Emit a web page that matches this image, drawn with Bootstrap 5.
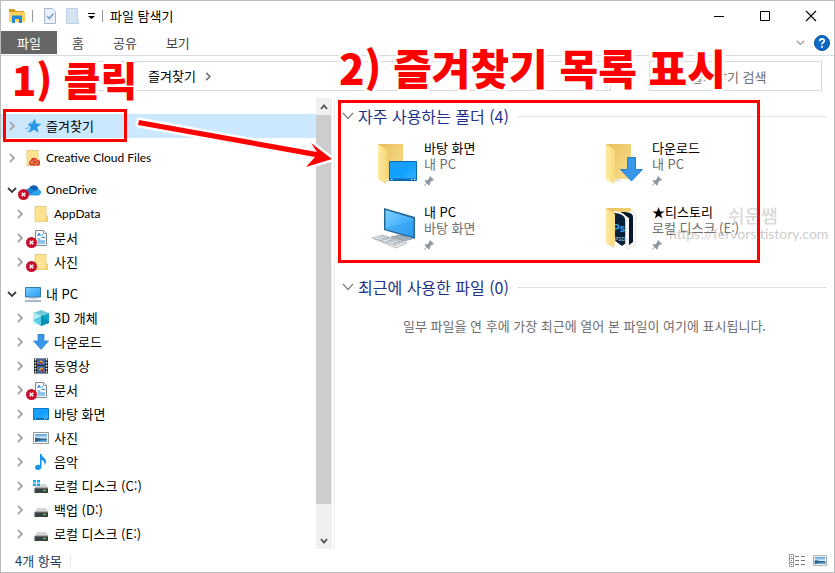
<!DOCTYPE html>
<html lang="ko">
<head>
<meta charset="utf-8">
<meta name="viewport" content="width=device-width, initial-scale=1">
<title>파일 탐색기</title>
<link href="https://cdn.jsdelivr.net/npm/bootstrap@5.3.0/dist/css/bootstrap.min.css" rel="stylesheet">
<style>
body{font-family:"Noto Sans CJK KR","Noto Sans",sans-serif;font-size:13px;line-height:16px;color:#000;background:#fff}
button{background:none;border:0;padding:0;color:inherit;display:inline-flex;align-items:center;justify-content:center}
svg{display:block;flex:none;overflow:visible}
.win{border:1px solid #bcbcbc}
.titlebar{height:30px}
.qat{padding-left:8px}
.sep{width:1px;height:12px;background:#999}
.qat .sep{margin:0 7px}
.cap-btn{width:46px;height:30px}
.ribbon{height:25px;border-bottom:1px solid #dadbdc;color:#444;gap:1px}
.file-tab{width:56px;height:23px;background:#666;color:#fff}
.ribbon-tab{height:23px;padding:0 14px}
.addr-row{padding:5px 12px 7px 16px}
.addr{height:30px;border:1px solid #d9d9d9;margin-right:38px;margin-left:58px;padding-left:64px}
.addr-end{width:4px;border-left:1px solid #e5e5e5}
.search{width:173px;height:30px;border:1px solid #d9d9d9;padding:0 8px 0 41px;outline:0;border-radius:0}
.search::placeholder{color:#6d6d6d;opacity:1}
.side{width:334px;border-right:1px solid #ececec}
.tree{padding-top:16px}
.tree ul{margin-bottom:8px}
.node{height:24px;padding-left:4px}
.node a{color:#000;text-decoration:none;gap:5px}
.node button{width:14px;height:24px;margin-right:6px}
.sub .node{padding-left:12px}
.latin{font-family:Lato,"Noto Sans CJK KR",sans-serif;font-size:12px}
.picked{background:#cce8ff}
.scroller{width:16px;background:#f0f0f0;margin-right:2px}
.scroller button{height:17px;width:16px}
.thumb{background:#cdcdcd;width:15px;margin-bottom:28px}
.pane{padding:8px 7px 0 7px}
.group-title{font-size:16px;line-height:20px;color:#1e3287;font-weight:400;margin:0}
.group-line{height:1px;background:#e2e2e2}
.tiles{display:grid;grid-template-columns:repeat(auto-fill,228px);row-gap:16px;padding:14px 0 25px 30px;margin-right:-7px}
.tile{gap:4px;color:#000;text-decoration:none;height:48px}
.muted{color:#6d6d6d}
.empty{color:#6d6d6d;padding-top:21px}
.status{height:23px;padding:0 7px 0 14px;color:#1e395b}
.red-frame{position:absolute;border:3px solid #f00;pointer-events:none}
.frame-a{left:3px;top:109px;width:124px;height:33px}
.frame-b{left:338px;top:100px;width:422px;height:163px}
.note{position:absolute;font-size:42px;line-height:48px;font-weight:900;color:#f00;white-space:nowrap;pointer-events:none;
text-shadow:3px 0 #fff,-3px 0 #fff,0 3px #fff,0 -3px #fff,2px 2px #fff,-2px 2px #fff,2px -2px #fff,-2px -2px #fff}
.note-a{left:12px;top:55px;font-size:40px}
.note-b{left:339px;top:43px}
.arrow{position:absolute;left:0;top:0;pointer-events:none}
.watermark{position:absolute;left:669px;top:206px;pointer-events:none;color:rgba(120,120,120,.4);font-family:Lato,"Noto Sans CJK KR",sans-serif;font-size:14px}
.watermark b{display:block;font-size:18px;line-height:20px;padding-left:59px;font-weight:500;color:rgba(120,120,120,.3)}
</style>
<script src="https://cdn.jsdelivr.net/npm/bootstrap@5.3.0/dist/js/bootstrap.bundle.min.js"></script>
</head>
<body>
<svg width="0" height="0" class="position-absolute" aria-hidden="true">
<defs>
<linearGradient id="gf" x1="0" x2="1"><stop offset="0" stop-color="#ffe9a2"/><stop offset="1" stop-color="#f9d978"/></linearGradient>
<linearGradient id="gb" x1="0" y1="0" x2="1" y2="1"><stop offset="0" stop-color="#e9be5c"/><stop offset="1" stop-color="#fae08f"/></linearGradient>
<linearGradient id="gs" x1="0" y1="0" x2="1" y2="1"><stop offset="0" stop-color="#7fd0ff"/><stop offset=".5" stop-color="#4db5fb"/><stop offset="1" stop-color="#2b9df0"/></linearGradient>
<linearGradient id="gd" x1="0" y1="0" x2="1" y2="1"><stop offset="0" stop-color="#1aa0f5"/><stop offset=".5" stop-color="#12a0ff"/><stop offset="1" stop-color="#3bb2ff"/></linearGradient>
<linearGradient id="gp" x1="0" y1="0" x2="0" y2="1"><stop offset="0" stop-color="#4b9be0"/><stop offset=".5" stop-color="#d5ecf7"/><stop offset=".65" stop-color="#2f5876"/><stop offset="1" stop-color="#4d8ec4"/></linearGradient>
<symbol id="right" viewBox="0 0 8 10"><path d="M2 1l4 4-4 4" fill="none" stroke="#a6a6a6" stroke-width="1.8"/></symbol>
<symbol id="down" viewBox="0 0 10 8"><path d="M1 2l4 4 4-4" fill="none" stroke="#404040" stroke-width="1.8"/></symbol>
<symbol id="thin" viewBox="0 0 12 8"><path d="M1 1l5 5.500 5-5.500" fill="none" stroke="#808080" stroke-width="1.200"/></symbol>
<symbol id="err" viewBox="0 0 12 12"><circle cx="6" cy="6" r="6" fill="#c50f2b"/><path d="M4 4l4 4M8 4l-4 4" stroke="#fff" stroke-width="1.500"/></symbol>
<symbol id="folder" viewBox="0 0 16 16"><path d="M2 .5h11v10l1.500-1v6H2z" fill="#ffe391" stroke="#eac566" stroke-width=".8"/><path d="M12.500 15.500v-4l2-1.800v5.800z" fill="#f3cc68"/></symbol>
<symbol id="doc" viewBox="0 0 16 16"><path d="M2.500.5h8l3 3v12h-11z" fill="#fff" stroke="#7c8790"/><path d="M10.500.5v3h3" fill="#e5e9ed" stroke="#7c8790" stroke-width=".8"/><path d="M4.500 6l1.500-3 1.500 3M5 5h2M8.500 5h1.500M8.500 7.500h3.500M4.500 9h3M4.500 11h7.500M4.500 13h7.500" fill="none" stroke="#2588d0"/></symbol>
<symbol id="desk" viewBox="0 0 16 16"><path d="M.5 2.500h15v11H.5z" fill="url(#gd)" stroke="#0878c9"/><path d="M1 12.500h14" stroke="#066cb8"/><path d="M2 12.500h1M11 12.500h1M13 12.500h1" stroke="#fff" stroke-width=".7"/></symbol>
<symbol id="dl" viewBox="0 0 16 16"><path d="M5 0h6v7h4.500L8 15.500.5 7H5z" fill="#3797e8" stroke="#2a80cd" stroke-width=".7"/></symbol>
<symbol id="photo" viewBox="0 0 16 12"><path d="M.5.500h15v11H.5z" fill="#fff" stroke="#999"/><path d="M2 2h12v8H2z" fill="url(#gp)"/><path d="M2 6c4-1 5 2 12 1v3H2z" fill="#28608a"/><path d="M3 9.500c4-1.500 7-1 11-2V10H3z" fill="#5da5d0"/></symbol>
<symbol id="disk" viewBox="0 0 16 16"><path d="M4 6h9l2 4H2z" fill="#d5d5d5"/><path d="M1.500 10h13.500v5H1.500z" fill="#3e4142"/><path d="M2 10h13" stroke="#888"/><path d="M10.500 12.500h2" stroke="#42ed54" stroke-width="1.600"/></symbol>
<symbol id="bigfolder" viewBox="0 0 48 48"><path d="M6 4h25v35H14z" fill="url(#gb)"/><path d="M6 4l9 6v27l-1 7L6 39z" fill="url(#gf)"/><path d="M15 42l8-2-8-1z" fill="#ddd"/></symbol>
<symbol id="pin" viewBox="0 0 10 10"><path d="M6 0l4 4-1 .7-1-.2L6 6.700 5.800 9 5 9.500 3 7.500.5 10 0 9.500 2.500 7 .5 5l.7-.7 2.300-.1L5.600 2 5.400.8z" fill="#8b969f"/></symbol>
</defs>
</svg>

<div class="win min-vh-100 d-flex flex-column position-relative">
<header>
 <div class="titlebar d-flex align-items-center">
  <div class="qat d-flex align-items-center flex-grow-1">
   <svg width="16" height="14" viewBox="0 0 16 14"><path d="M0 0h5l2 2h8v2H0z" fill="#d99c16"/><path d="M0 3h16v10H0z" fill="#ffd35e"/><path d="M3 6.500h10V14h-3V10H6v4H3z" fill="#2588d5"/></svg>
   <span class="sep"></span>
   <button class="ms-1" aria-label="속성"><svg width="12" height="16" viewBox="0 0 12 16"><path d="M.5.500h8l3 3v12H.5z" fill="#e8f1fb" stroke="#a7bad2"/><path d="M3 8l2.300 2.500L9.500 5.500" fill="none" stroke="#7d9bc4" stroke-width="1.500"/></svg></button>
   <button class="ms-2" aria-label="새 폴더"><svg width="16" height="16" viewBox="0 0 16 16"><path d="M2.500.5h11v11h1v4h-12z" fill="#d7e3f3" stroke="#c1d1e8"/></svg></button>
   <button class="ms-2" aria-label="빠른 실행 도구 모음 사용자 지정"><svg width="7" height="6" viewBox="0 0 7 6"><path d="M0 .5h7" stroke="#000"/><path d="M0 3h7L3.500 6z" fill="#000"/></svg></button>
   <span class="sep"></span>
   <span>파일 탐색기</span>
  </div>
  <button class="cap-btn" aria-label="최소화"><svg width="10" height="10"><path d="M0 5.500h10" stroke="#000"/></svg></button>
  <button class="cap-btn" aria-label="최대화"><svg width="10" height="10"><path d="M.5.500h9v9h-9z" fill="none" stroke="#000"/></svg></button>
  <button class="cap-btn" aria-label="닫기"><svg width="10" height="10"><path d="M0 0l10 10M10 0L0 10" stroke="#000" stroke-width="1.100"/></svg></button>
 </div>
 <nav class="ribbon d-flex align-items-start">
  <button class="file-tab">파일</button><button class="ribbon-tab">홈</button><button class="ribbon-tab">공유</button><button class="ribbon-tab">보기</button>
  <button class="ms-auto mt-2" aria-label="리본 확장"><svg width="9" height="8" viewBox="0 0 12 8"><path d="M1 1l5 5 5-5" fill="none" stroke="#999" stroke-width="1.500"/></svg></button>
  <button class="ms-2 me-1 mt-1" aria-label="도움말"><svg width="16" height="16" viewBox="0 0 16 16"><circle cx="8" cy="8" r="7.500" fill="#0b69c7" stroke="#07549f"/><path d="M5.700 6.200c0-3.200 4.800-3 4.600-.3C10.200 7.500 8 7.500 8 9.500" fill="none" stroke="#fff" stroke-width="1.700"/><circle cx="8" cy="11.800" r="1.100" fill="#fff"/></svg></button>
 </nav>
 <div class="addr-row d-flex align-items-center">
  <button aria-label="뒤로"><svg width="8" height="10" viewBox="0 0 8 10"><path d="M6 1L2 5l4 4" fill="none" stroke="#777" stroke-width="1.500"/></svg></button>
  <div class="addr d-flex align-items-center flex-grow-1"><span>즐겨찾기</span><svg class="ms-2" width="8" height="9"><use href="#right" style="filter:brightness(.7)"/></svg><span class="addr-end ms-auto align-self-stretch"></span></div>
  <input class="search" type="search" placeholder="즐겨찾기 검색" aria-label="즐겨찾기 검색">
 </div>
</header>

<div class="d-flex flex-grow-1">
 <aside class="side d-flex flex-shrink-0">
  <nav class="tree flex-grow-1" aria-label="탐색 창">
   <ul class="list-unstyled"><li class="node picked d-flex align-items-center"><button aria-label="펼치기"><svg width="8" height="10"><use href="#right"/></svg></button><a href="#" class="d-flex align-items-center"><svg width="16" height="16" viewBox="0 0 16 16"><path d="M9.500 1.500l1.400 4.500 4.800.1-4 3 1.300 5-4-2.800-4.500 2.800 1.700-5-3-3 4.300-.1z" fill="#2594e4" stroke="#2594e4" stroke-width=".8"/><path d="M5 4.500l3-.5M0 11l4-1.500M2 14l4-2.500" stroke="#5bb2ee"/></svg>즐겨찾기</a></li></ul>
   <ul class="list-unstyled"><li class="node d-flex align-items-center"><button aria-label="펼치기"><svg width="8" height="10"><use href="#right"/></svg></button><a href="#" class="latin d-flex align-items-center"><svg width="16" height="16" viewBox="0 0 16 16"><use href="#folder" width="16" height="16"/><path d="M6 15.500a2.800 2.800 0 0 1-.2-5.300c1-3 5-3.200 6.200-.4 4 .2 4 5.700.5 5.700z" fill="#dc2c1e"/><path d="M8 14c-3 0-3-2.500-1-2.500 1.500 0 2 2.500 4 2.500s2.500-2.700.5-2.800M8 11c1-2 3-1 3.500.5" fill="none" stroke="#ffe391" stroke-width=".8"/></svg>Creative Cloud Files</a></li></ul>
   <ul class="list-unstyled">
    <li><div class="node d-flex align-items-center"><button aria-label="접기"><svg width="10" height="8"><use href="#down"/></svg></button><a href="#" class="latin d-flex align-items-center"><svg width="16" height="16" viewBox="0 0 16 16"><path d="M4 7a5 5 0 0 1 9-1.500L14 9H3z" fill="#0f5fb8"/><path d="M2 13a3.500 3.500 0 0 1 2-6.500C7 6 9 8 14 12z" fill="#1785d8"/><path d="M3 13.500L13 7c4 .5 4 6 .5 6.500z" fill="#2aa2ee"/><use href="#err" x="-7" y="7" width="11" height="11"/></svg>OneDrive</a></div>
    <ul class="sub list-unstyled">
     <li class="node d-flex align-items-center"><button aria-label="펼치기"><svg width="8" height="10"><use href="#right"/></svg></button><a href="#" class="latin d-flex align-items-center"><svg width="16" height="16"><use href="#folder"/></svg>AppData</a></li>
     <li class="node d-flex align-items-center"><button aria-label="펼치기"><svg width="8" height="10"><use href="#right"/></svg></button><a href="#" class="d-flex align-items-center"><svg width="16" height="16"><use href="#doc" width="16" height="16"/><use href="#err" x="-7" y="7" width="11" height="11"/></svg>문서</a></li>
     <li class="node d-flex align-items-center"><button aria-label="펼치기"><svg width="8" height="10"><use href="#right"/></svg></button><a href="#" class="d-flex align-items-center"><svg width="16" height="16"><use href="#folder" width="16" height="16"/><use href="#err" x="-7" y="7" width="11" height="11"/></svg>사진</a></li>
    </ul></li></ul>
   <ul class="list-unstyled mb-0">
    <li><div class="node d-flex align-items-center"><button aria-label="접기"><svg width="10" height="8"><use href="#down"/></svg></button><a href="#" class="d-flex align-items-center"><svg width="16" height="16" viewBox="0 0 16 16"><path d="M.5 1.500h15v9.500H.5z" fill="url(#gs)" stroke="#357ba9"/><path d="M4 12.500h8" stroke="#c0c8ce"/><path d="M0 15h16" stroke="#71899a" stroke-width="1.200"/></svg>내 PC</a></div>
    <ul class="sub list-unstyled mb-0">
     <li class="node d-flex align-items-center"><button aria-label="펼치기"><svg width="8" height="10"><use href="#right"/></svg></button><a href="#" class="d-flex align-items-center"><svg width="16" height="16" viewBox="0 0 16 16"><path d="M0 3l8-3 8 3-8 3z" fill="#71cbdc"/><path d="M0 3l8 3v10l-8-3z" fill="#b1edf4"/><path d="M16 3L8 6v10l8-3z" fill="#12a7c7"/><path d="M8 6l8 5v2l-8 3z" fill="#0792b5"/><path d="M0 10l8-4v10z" fill="#56cde0"/></svg>3D 개체</a></li>
     <li class="node d-flex align-items-center"><button aria-label="펼치기"><svg width="8" height="10"><use href="#right"/></svg></button><a href="#" class="d-flex align-items-center"><svg width="16" height="16"><use href="#dl"/></svg>다운로드</a></li>
     <li class="node d-flex align-items-center"><button aria-label="펼치기"><svg width="8" height="10"><use href="#right"/></svg></button><a href="#" class="d-flex align-items-center"><svg width="16" height="16" viewBox="0 0 16 16"><path d="M1 .5h14v15H1z" fill="#222"/><path d="M4 1h8v6H4zM4 8h8v7H4z" fill="#3b66aa"/><path d="M5 5l3-3 3 3zM5 12l4-3 3 4z" fill="#e0a23a"/><path d="M6 4h3v2H6zM8 11h3v3H8z" fill="#b5392e"/><path d="M2.500 1v14M13.500 1v14" stroke="#fff" stroke-width="1.500" stroke-dasharray="1.500 1.500"/></svg>동영상</a></li>
     <li class="node d-flex align-items-center"><button aria-label="펼치기"><svg width="8" height="10"><use href="#right"/></svg></button><a href="#" class="d-flex align-items-center"><svg width="16" height="16"><use href="#doc" width="16" height="16"/><use href="#err" x="-7" y="7" width="11" height="11"/></svg>문서</a></li>
     <li class="node d-flex align-items-center"><button aria-label="펼치기"><svg width="8" height="10"><use href="#right"/></svg></button><a href="#" class="d-flex align-items-center"><svg width="16" height="16"><use href="#desk"/></svg>바탕 화면</a></li>
     <li class="node d-flex align-items-center"><button aria-label="펼치기"><svg width="8" height="10"><use href="#right"/></svg></button><a href="#" class="d-flex align-items-center"><svg width="16" height="12"><use href="#photo"/></svg>사진</a></li>
     <li class="node d-flex align-items-center"><button aria-label="펼치기"><svg width="8" height="10"><use href="#right"/></svg></button><a href="#" class="d-flex align-items-center"><svg width="16" height="16" viewBox="0 0 16 16"><path d="M7 0h1.500c.5 3.500 4.500 4 4.500 7.500 0 1.500-.8 3-1.500 3.500.5-3-1-4.500-3-5v7C8.500 16.500 2 17 2 13.500c0-2.500 3-3.200 5-2.300z" fill="#1595ed"/></svg>음악</a></li>
     <li class="node d-flex align-items-center"><button aria-label="펼치기"><svg width="8" height="10"><use href="#right"/></svg></button><a href="#" class="d-flex align-items-center"><svg width="16" height="16"><use href="#disk" width="16" height="16"/><path d="M0 2h3v2.500H0zM4 2h3v2.500H4zM0 5.500h3V8H0zM4 5.500h3V8H4z" fill="#12aaf0"/></svg>로컬 디스크 (C:)</a></li>
     <li class="node d-flex align-items-center"><button aria-label="펼치기"><svg width="8" height="10"><use href="#right"/></svg></button><a href="#" class="d-flex align-items-center"><svg width="16" height="16"><use href="#disk"/></svg>백업 (D:)</a></li>
     <li class="node d-flex align-items-center"><button aria-label="펼치기"><svg width="8" height="10"><use href="#right"/></svg></button><a href="#" class="d-flex align-items-center"><svg width="16" height="16"><use href="#disk"/></svg>로컬 디스크 (E:)</a></li>
    </ul></li></ul>
  </nav>
  <div class="scroller d-flex flex-column">
   <button aria-label="위로 스크롤"><svg width="8" height="6"><path d="M1 5l3-3.500L7 5" fill="none" stroke="#505050" stroke-width="1.800"/></svg></button>
   <div class="thumb flex-grow-1"></div>
   <button aria-label="아래로 스크롤"><svg width="8" height="6"><path d="M1 1l3 3.500L7 1" fill="none" stroke="#505050" stroke-width="1.800"/></svg></button>
  </div>
 </aside>

 <main class="pane flex-grow-1">
  <section>
   <div class="d-flex align-items-center"><svg width="12" height="8" class="me-1"><use href="#thin"/></svg><h2 class="group-title">자주 사용하는 폴더 (4)</h2><span class="group-line flex-grow-1 ms-2"></span></div>
   <div class="tiles">
    <a href="#" class="tile d-flex"><svg width="48" height="48" viewBox="0 0 48 48"><use href="#bigfolder" width="48" height="48"/><path d="M17.500 21.500h27v19h-27z" fill="url(#gd)" stroke="#0869b4"/><path d="M18 39.500h26" stroke="#0869b4" stroke-width="2"/><path d="M19 39.500h1.500M39 39.500h1.500M42 39.500h1.500" stroke="#fff"/></svg><span>바탕 화면<br><span class="muted">내 PC</span><svg class="mt-1" width="10" height="10"><use href="#pin"/></svg></span></a>
    <a href="#" class="tile d-flex"><svg width="48" height="48" viewBox="0 0 48 48"><use href="#bigfolder" width="48" height="48"/><path d="M27.500 17.500h8v12h7L31.500 41 20.500 29.500h7z" fill="#3797e8" stroke="#2a80cd"/></svg><span>다운로드<br><span class="muted">내 PC</span><svg class="mt-1" width="10" height="10"><use href="#pin"/></svg></span></a>
    <a href="#" class="tile d-flex"><svg width="48" height="48" viewBox="0 0 48 48"><path d="M12 4l31 9v22l-31-9z" fill="#276796"/><path d="M13.500 6l28 8.500v18.500l-28-8z" fill="url(#gs)"/><path d="M13.500 24L41 17v16z" fill="#2d9cf0" opacity=".5"/><path d="M29 31l6 2v3l-6-1z" fill="#9da7ae"/><path d="M19 33l8-2 13 4-8 2z" fill="#a9b2b9" stroke="#77848d" stroke-width=".6"/><path d="M0 34l10-3 25 8-11 5z" fill="#e7eaec" stroke="#a1a9ae" stroke-width=".7"/><path d="M3 34.500l22 7M6 33l22 7M9 32l22 7M8 37l9-4M14 39l9-4M20 41l9-4" stroke="#a1a9ae" stroke-width=".8"/></svg><span>내 PC<br><span class="muted">바탕 화면</span><svg class="mt-1" width="10" height="10"><use href="#pin"/></svg></span></a>
    <a href="#" class="tile d-flex"><svg width="48" height="48" viewBox="0 0 48 48"><path d="M6 4h25v30H14z" fill="url(#gb)"/><path d="M17 11l17-4 2 3v31l-9 4z" fill="#f5f5f5" stroke="#ddd" stroke-width=".5"/><path d="M20 8c5 0 13 0 13 5v25l-4 3V14z" fill="#06182b"/><path d="M14 9c7 0 11 3 12 7v23l-4 3-8-6z" fill="#06203a"/><path d="M14 8c7 0 12 3 12 8v27" stroke="#fff" fill="none" stroke-width="1.500"/><text x="13" y="28" font-size="10" font-weight="700" font-family="Liberation Sans, sans-serif" fill="#31a8ff">Ps</text><text x="15" y="37" font-size="5" fill="#bcd6e8" font-family="Liberation Sans, sans-serif">PSD</text><path d="M6 4l9 6v27l-1 7L6 39z" fill="url(#gf)"/></svg><span>★티스토리<br><span class="muted">로컬 디스크 (E:)</span><svg class="mt-1" width="10" height="10"><use href="#pin"/></svg></span></a>
   </div>
  </section>
  <section>
   <div class="d-flex align-items-center"><svg width="12" height="8" class="me-1"><use href="#thin"/></svg><h2 class="group-title">최근에 사용한 파일 (0)</h2><span class="group-line flex-grow-1 ms-2"></span></div>
   <p class="empty text-center mb-0">일부 파일을 연 후에 가장 최근에 열어 본 파일이 여기에 표시됩니다.</p>
  </section>
 </main>
</div>

<footer class="status d-flex align-items-center">
 <span>4개 항목</span><span class="sep ms-2 opacity-25"></span>
 <button class="ms-auto" aria-label="자세히"><svg width="16" height="13" viewBox="0 0 16 13"><path d="M.5.500h4v12h-4zM.5 4.500h4M.5 8.500h4" fill="#fff" stroke="#999"/><path d="M2 2.500h1" stroke="#2588d0"/><path d="M2 6.500h1" stroke="#2588d0"/><path d="M2 10.500h1" stroke="#d22"/><path d="M6 2.500h4M12 2.500h4M6 6.500h4M12 6.500h4M6 10.500h4M12 10.500h4" stroke="#777"/></svg></button>
 <button class="ms-2" aria-label="큰 아이콘"><svg width="14" height="11"><use href="#photo"/></svg></button>
</footer>
</div>

<div class="red-frame frame-a"></div>
<div class="red-frame frame-b"></div>
<svg class="arrow" width="335" height="175" aria-hidden="true"><path d="M139 120L317 152 311 143 332 159 306 167 315 157 138 125z" fill="#f00" stroke="#fff" stroke-width="5" paint-order="stroke" stroke-linejoin="round"/></svg>
<div class="note note-a">1) 클릭</div>
<div class="note note-b">2) 즐겨찾기 목록 표시</div>
<div class="watermark"><b>쉬운쌤</b>https://fervors.tistory.com</div>
</body>
</html>
